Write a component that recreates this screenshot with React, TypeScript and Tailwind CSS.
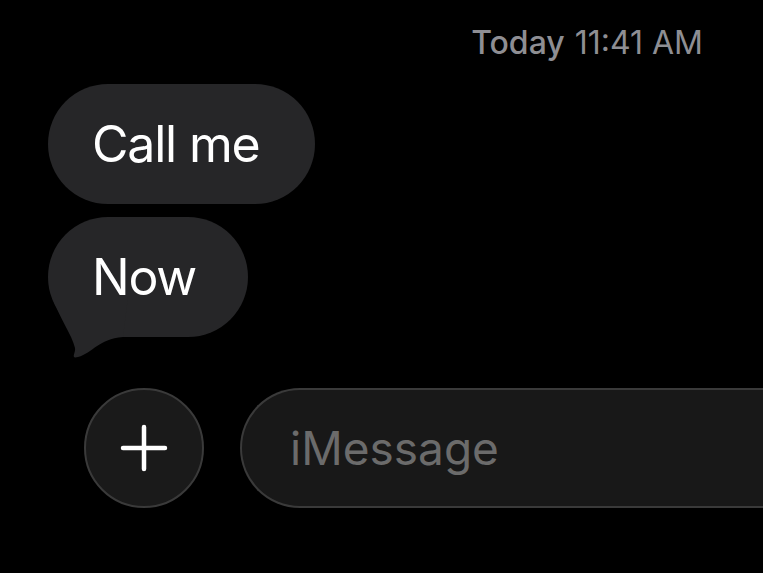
import React from 'react';

const font = { fontFamily: 'Inter, "Noto Sans", sans-serif' };

const Bubble: React.FC<{ text: string; width: string; tail?: boolean }> = ({ text, width, tail }) => (
    <div className={`relative h-[120px] ${width} rounded-full bg-[#262628] flex items-center pl-[44px]`}>
        {tail && (
            <svg className="absolute left-0 top-0" width="100" height="145" viewBox="0 0 100 145">
                <path
                    d="M4 80 C11 100, 24 118, 27 131 C28 136, 22 142, 30 140 C45 136, 50 122, 75 120 L80 80 Z"
                    fill="#262628"
                />
            </svg>
        )}
        <span className="relative text-[50px] leading-[60px] text-white tracking-[-1.2px]">{text}</span>
    </div>
);

export default function App() {
    return (
        <div className="w-[763px] h-[573px] bg-black overflow-hidden flex flex-col" style={font}>
            <div className="mt-[23px] pr-[60px] flex justify-end text-[32px] leading-[40px] text-[#8e8e93]">
                <span className="font-medium">Today</span>
                <span className="ml-[10px]">11:41 AM</span>
            </div>

            <div className="mt-[21px] pl-[48px] flex flex-col gap-[13px]">
                <Bubble text="Call me" width="w-[267px]" />
                <Bubble text="Now" width="w-[200px]" tail />
            </div>

            <div className="mt-[51px] pl-[84px] flex items-center gap-[36px]">
                <button className="w-[120px] h-[120px] shrink-0 rounded-full bg-[#1a1a1a] border-2 border-[#3a3a3a] flex items-center justify-center">
                    <svg width="48" height="48" viewBox="0 0 48 48">
                        <path d="M24 3v42M3 24h42" stroke="#fff" strokeWidth="4.5" strokeLinecap="round" />
                    </svg>
                </button>
                <div className="w-[560px] h-[120px] shrink-0 rounded-l-full bg-[#181818] border-2 border-r-0 border-[#3a3a3a] flex items-center pl-[48px]">
                    <span className="text-[46px] leading-[52px] text-[#6b6b6b]">iMessage</span>
                </div>
            </div>
        </div>
    );
}
